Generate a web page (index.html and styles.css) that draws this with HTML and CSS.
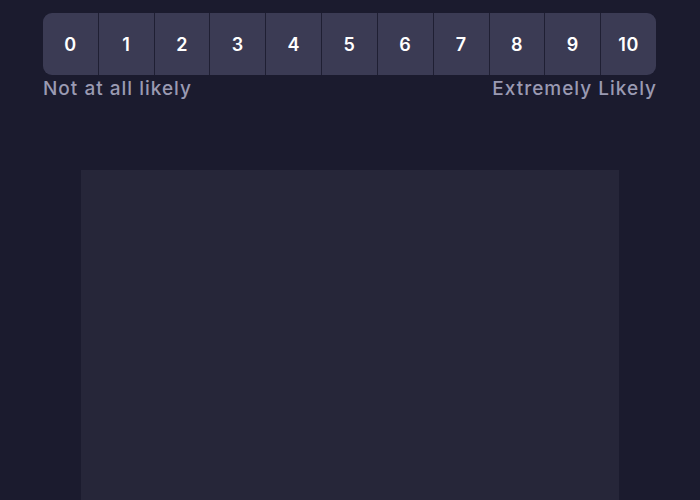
FILE: index.html
```html
<!DOCTYPE html>
<html>
<head>
<meta charset="utf-8">
<link rel="stylesheet" href="styles.css">
</head>
<body>
<div class="page">
  <div class="scale">
    <div class="btns">
      <button class="btn">0</button>
      <button class="btn">1</button>
      <button class="btn">2</button>
      <button class="btn">3</button>
      <button class="btn">4</button>
      <button class="btn">5</button>
      <button class="btn">6</button>
      <button class="btn">7</button>
      <button class="btn">8</button>
      <button class="btn">9</button>
      <button class="btn">10</button>
    </div>
    <div class="labels">
      <span>Not at all likely</span>
      <span>Extremely Likely</span>
    </div>
  </div>
  <div class="panel"></div>
</div>
</body>
</html>
```
FILE: styles.css
```css
html, body {
  margin: 0;
  padding: 0;
  background: #1b1b2e;
  height: 100%;
  overflow: hidden;
}
.page {
  display: flex;
  flex-direction: column;
  align-items: center;
  padding-top: 13px;
  font-family: Inter, "Noto Sans", sans-serif;
}
.scale {
  width: 613px;
  margin-left: -1px;
}
.btns {
  display: flex;
  gap: 1px;
  background: #1f1f33;
  border-radius: 9px;
  overflow: hidden;
}
.btn {
  flex: 1;
  height: 62px;
  border: none;
  background: #3b3b54;
  color: #ffffff;
  font-family: inherit;
  font-size: 18px;
  font-weight: 600;
  letter-spacing: 0.5px;
  padding: 0;
}
.labels {
  display: flex;
  justify-content: space-between;
  color: #9a9ab2;
  font-size: 19px;
  font-weight: 500;
  letter-spacing: 1px;
  margin-top: 2px;
  line-height: 24px;
}
.labels span:last-child {
  margin-right: -1px;
}
.panel {
  margin-top: 69px;
  width: 538px;
  height: 340px;
  background: #262639;
}
```
